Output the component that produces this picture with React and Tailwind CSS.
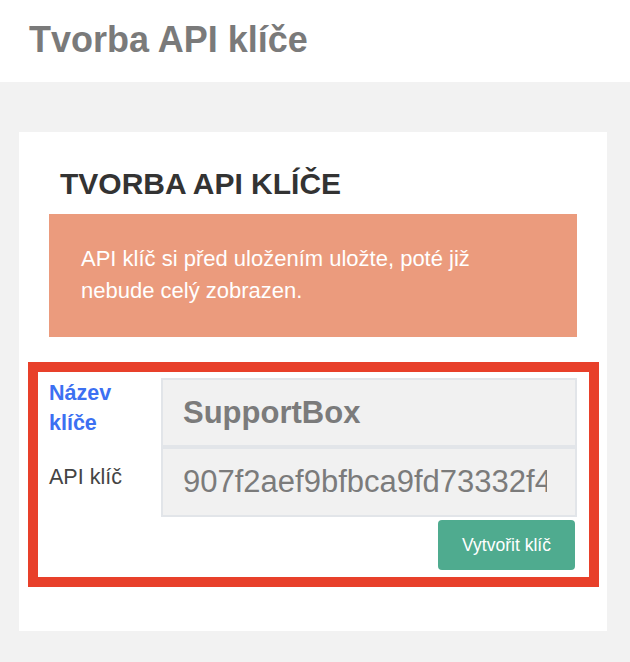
export default function App() {
  const font = { fontFamily: '"Liberation Sans", Arial, sans-serif' };
  return (
    <div className="min-h-[662px] w-[630px] bg-[#f2f2f2] font-['Liberation_Sans',Arial,sans-serif]" style={font}>
      <header className="h-[82px] bg-white pl-[29px] pt-[20px]">
        <h1 className="text-[36px] leading-[40px] font-bold text-[#7a7a7a]">Tvorba API klíče</h1>
      </header>
      <main className="pt-[50px] pb-[31px]">
        <section className="ml-[19px] w-[588px] bg-white pt-[34px] pb-[44px]">
          <h2 className="ml-[41px] text-[30px] leading-[36px] font-bold text-[#333333]">TVORBA API KLÍČE</h2>
          <div className="mx-[30px] mt-[12px] bg-[#eb9b7d] pl-[32px] pr-[40px] pt-[29px] pb-[30px] text-[22px] leading-[32px] text-white">
            <p className="max-w-[400px]">API klíč si před uložením uložte, poté již nebude celý zobrazen.</p>
          </div>
          <div className="ml-[9px] mt-[25px] w-[571px] border-[10px] border-[#e8402a] pl-[11px] pr-[12px] pt-[6px] pb-[7px]">
            <div className="grid grid-cols-[112px_416px]">
              <label className="text-[21.5px] leading-[30px] font-bold text-[#3c70f2]">Název klíče</label>
              <input
                readOnly
                value="SupportBox"
                className="h-[69px] w-full border-2 border-[#e2e5e9] bg-[#f1f1f1] pl-[20px] pr-[28px] text-[31px] font-bold text-[#7b7b7b] outline-none"
                style={font}
              />
              <label className="pt-[15px] text-[21.5px] leading-[30px] text-[#444444]">API klíč</label>
              <input
                readOnly
                value="907f2aef9bfbca9fd73332f4c1e8a5d2b7"
                className="h-[70px] w-full border-2 border-[#e2e5e9] bg-[#f1f1f1] pl-[20px] pr-[28px] text-[31px] text-[#7b7b7b] outline-none"
                style={font}
              />
            </div>
            <div className="mt-[3px] flex justify-end pr-[2px]">
              <button className="h-[50px] w-[137px] rounded-[4px] bg-[#4fab8f] text-[17.5px] text-white" style={font}>
                Vytvořit klíč
              </button>
            </div>
          </div>
        </section>
      </main>
    </div>
  );
}
